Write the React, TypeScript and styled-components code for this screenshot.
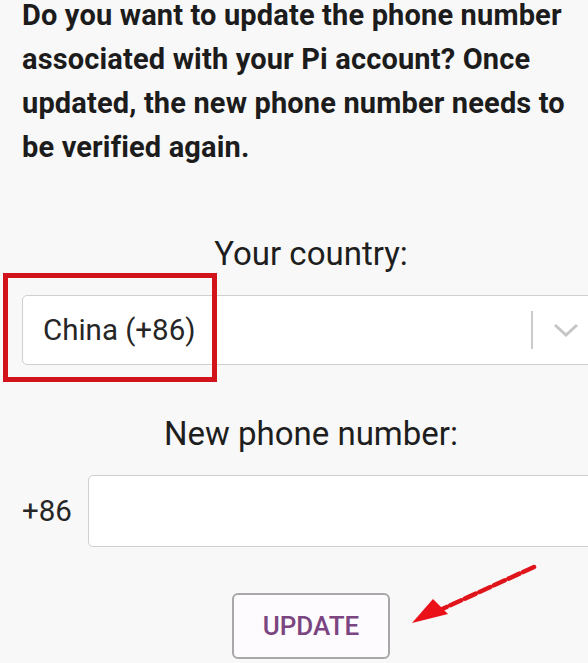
import React from "react";
import styled, { createGlobalStyle } from "styled-components";

const Global = createGlobalStyle`
  html, body { margin: 0; padding: 0; background: #f8f8f8; overflow: hidden; }
  body { font-family: Roboto, "Liberation Sans", Arial, sans-serif; }
`;

const Page = styled.div`
  position: relative;
  width: 588px;
  height: 663px;
  overflow: hidden;
  background: #f8f8f8;
`;

const Column = styled.div`
  width: 578px;
  margin-left: 22px;
  padding-top: 1px;
  display: flex;
  flex-direction: column;
`;

const Heading = styled.p`
  margin: -8px 0 0;
  max-width: 556px;
  font-size: 29px;
  font-weight: 700;
  line-height: 44px;
  color: #1c1c1c;
  letter-spacing: 0.15px;
`;

const Label = styled.div<{ $top: number }>`
  margin-top: ${(p) => p.$top}px;
  text-align: center;
  font-size: 33px;
  line-height: 40px;
  color: #1e1e1e;
`;

const SelectBox = styled.div`
  margin-top: 21px;
  height: 70px;
  width: 602px;
  box-sizing: border-box;
  border: 1.5px solid #cfcfcf;
  border-radius: 5px;
  background: #fff;
  display: flex;
  align-items: center;
  padding-left: 20px;
`;

const SelectValue = styled.span`
  flex: 1;
  font-size: 29.5px;
  color: #262626;
`;

const Divider = styled.span`
  width: 2.5px;
  height: 38px;
  background: #cbcbcb;
  margin-right: 20px;
`;

const Chevron = styled.span`
  width: 70px;
  display: flex;
  color: #c6c6c6;
`;

const PhoneRow = styled.div`
  margin-top: 21px;
  display: flex;
  align-items: center;
  gap: 16px;
`;

const Prefix = styled.span`
  font-size: 29.5px;
  color: #262626;
  width: 50px;
`;

const PhoneInput = styled.div`
  height: 72px;
  flex: 1;
  min-width: 520px;
  box-sizing: border-box;
  border: 1.5px solid #d0d0d0;
  border-radius: 5px;
  background: #fff;
`;

const ButtonRow = styled.div`
  margin-top: 46px;
  display: flex;
  padding-left: 210px;
`;

const UpdateButton = styled.button`
  width: 158px;
  height: 66px;
  box-sizing: border-box;
  border: 2px solid #a8a8a8;
  border-radius: 6px;
  background: #fdfbfd;
  color: #7a4580;
  font-family: Roboto, "Liberation Sans", Arial, sans-serif;
  font-size: 26px;
  font-weight: 500;
  padding: 0;
`;

const RedFrame = styled.div`
  position: absolute;
  left: 3px;
  top: 273px;
  width: 214px;
  height: 109px;
  box-sizing: border-box;
  border: 5px solid #d3131b;
`;

const Arrow = styled.svg`
  position: absolute;
  left: 400px;
  top: 555px;
`;

export default function App() {
  return (
    <Page>
      <Global />
      <Column>
        <Heading>
          Do you want to update the phone number associated with your Pi
          account? Once updated, the new phone number needs to be verified
          again.
        </Heading>
        <Label $top={65}>Your country:</Label>
        <SelectBox>
          <SelectValue>China (+86)</SelectValue>
          <Divider />
          <Chevron>
            <svg width="26" height="16" viewBox="0 0 26 16">
              <path d="M2 3 L13 13 L24 3" fill="none" stroke="currentColor" strokeWidth="3" />
            </svg>
          </Chevron>
        </SelectBox>
        <Label $top={49}>New phone number:</Label>
        <PhoneRow>
          <Prefix>+86</Prefix>
          <PhoneInput />
        </PhoneRow>
        <ButtonRow>
          <UpdateButton>UPDATE</UpdateButton>
        </ButtonRow>
      </Column>
      <RedFrame />
      <Arrow width="150" height="80" viewBox="0 0 150 80">
        <line x1="134" y1="12" x2="40" y2="55" stroke="#e0141b" strokeWidth="4.5" strokeDasharray="12 4" strokeLinecap="round" />
        <polygon points="12,68 33,44 48,59" fill="#ea1118" />
      </Arrow>
    </Page>
  );
}
